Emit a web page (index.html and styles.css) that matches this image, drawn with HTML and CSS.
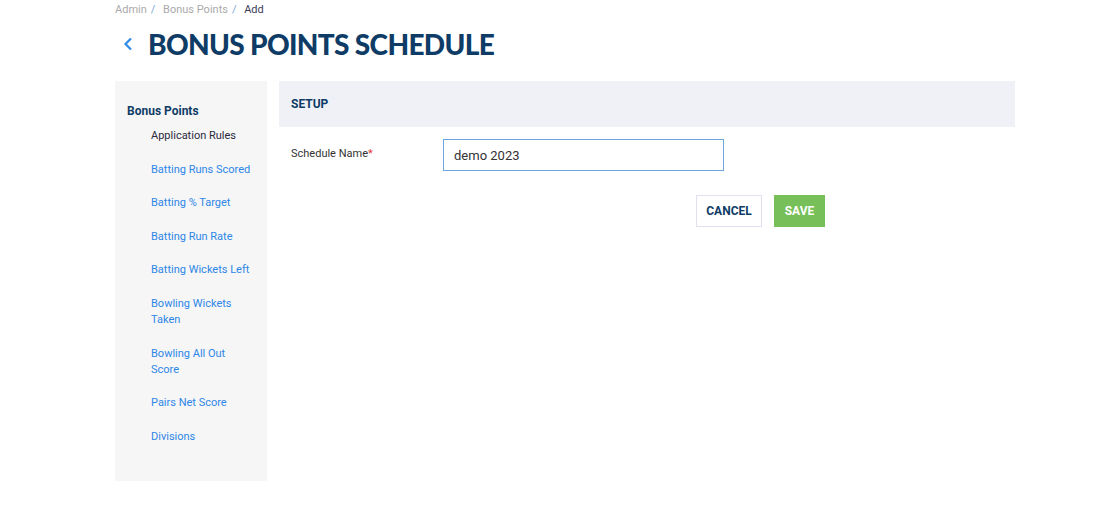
FILE: index.html
```html
<!DOCTYPE html>
<html lang="en">
<head>
    <meta charset="UTF-8">
    <title>Bonus Points Schedule</title>
    <link rel="stylesheet" href="styles.css">
</head>
<body>
    <div class="page">
        <div class="breadcrumb">
            <span class="crumb">Admin</span><span class="sep">/</span>
            <span class="crumb">Bonus Points</span><span class="sep">/</span>
            <span class="crumb current">Add</span>
        </div>

        <h1 class="title">
            <svg class="back" width="10" height="14" viewBox="0 0 10 14"><path d="M8 1.5 L2.5 7 L8 12.5" fill="none" stroke="#2e8ae6" stroke-width="2.2"/></svg>
            BONUS POINTS SCHEDULE
        </h1>

        <div class="layout">
            <aside class="sidebar">
                <div class="side-title">Bonus Points</div>
                <ul class="side-list">
                    <li class="active">Application Rules</li>
                    <li>Batting Runs Scored</li>
                    <li>Batting % Target</li>
                    <li>Batting Run Rate</li>
                    <li>Batting Wickets Left</li>
                    <li>Bowling Wickets Taken</li>
                    <li>Bowling All Out Score</li>
                    <li>Pairs Net Score</li>
                    <li>Divisions</li>
                </ul>
            </aside>

            <main class="content">
                <div class="panel-head">SETUP</div>
                <form class="form">
                    <div class="row">
                        <label for="schedule-name">Schedule Name<span class="req">*</span></label>
                        <input type="text" id="schedule-name" value="demo 2023">
                    </div>
                    <div class="actions">
                        <button type="button" class="btn cancel">CANCEL</button>
                        <button type="submit" class="btn save">SAVE</button>
                    </div>
                </form>
            </main>
        </div>
    </div>
</body>
</html>
```

FILE: styles.css
```css
* {
    margin: 0;
    padding: 0;
    box-sizing: border-box;
}

body {
    font-family: Roboto, 'Liberation Sans', sans-serif;
    background: #fff;
    color: #333;
}

.page {
    width: 900px;
    margin-left: 115px;
}

.breadcrumb {
    font-size: 11px;
    line-height: 18px;
    padding-top: 1px;
    color: #aaa;
}

.sep {
    color: #7aa7d6;
    margin: 0 5px 0 4px;
}

.current {
    color: #3b3b58;
}

.title {
    display: flex;
    align-items: center;
    font-family: Lato, sans-serif;
    font-weight: 900;
    font-size: 28px;
    letter-spacing: -0.65px;
    color: #0e3c66;
    margin: 7px 0 19px 8px;
    height: 36px;
}

.back {
    margin-right: 15px;
}

.layout {
    display: flex;
    gap: 12px;
}

.sidebar {
    width: 152px;
    height: 400px;
    background: #f6f6f7;
    padding: 22px 12px 0 12px;
}

.side-title {
    font-size: 12px;
    font-weight: 700;
    color: #0e3c66;
    line-height: 16px;
}

.side-list {
    list-style: none;
    padding-left: 24px;
    margin-top: 9px;
}

.side-list li {
    font-size: 11px;
    line-height: 16px;
    color: #2e86e6;
    margin-bottom: 17.6px;
}

.side-list li.active {
    color: #2a2a3a;
}

.content {
    flex: 1;
}

.panel-head {
    height: 46px;
    background: #f0f1f6;
    padding-left: 12px;
    font-size: 12px;
    font-weight: 700;
    color: #0e3c66;
    line-height: 46px;
}

.form {
    padding: 12px 12px 0 12px;
}

.row {
    display: flex;
    align-items: flex-start;
}

.row label {
    width: 152px;
    font-size: 11px;
    line-height: 16px;
    padding-top: 7px;
    color: #333;
}

.req {
    color: #e53935;
}

.row input {
    width: 281px;
    height: 32px;
    border: 1px solid #6aa5de;
    padding: 0 10px;
    font-family: Roboto, sans-serif;
    font-size: 13px;
    color: #333;
    outline: none;
}

.actions {
    display: flex;
    gap: 12px;
    margin: 24px 0 0 405px;
}

.btn {
    height: 32px;
    font-family: Roboto, sans-serif;
    font-size: 12px;
    font-weight: 700;
    cursor: pointer;
}

.cancel {
    width: 66px;
    background: #fff;
    border: 1px solid #dfe2ee;
    color: #0e3c66;
}

.save {
    width: 51px;
    background: #77bf58;
    border: none;
    color: #fff;
}
```
